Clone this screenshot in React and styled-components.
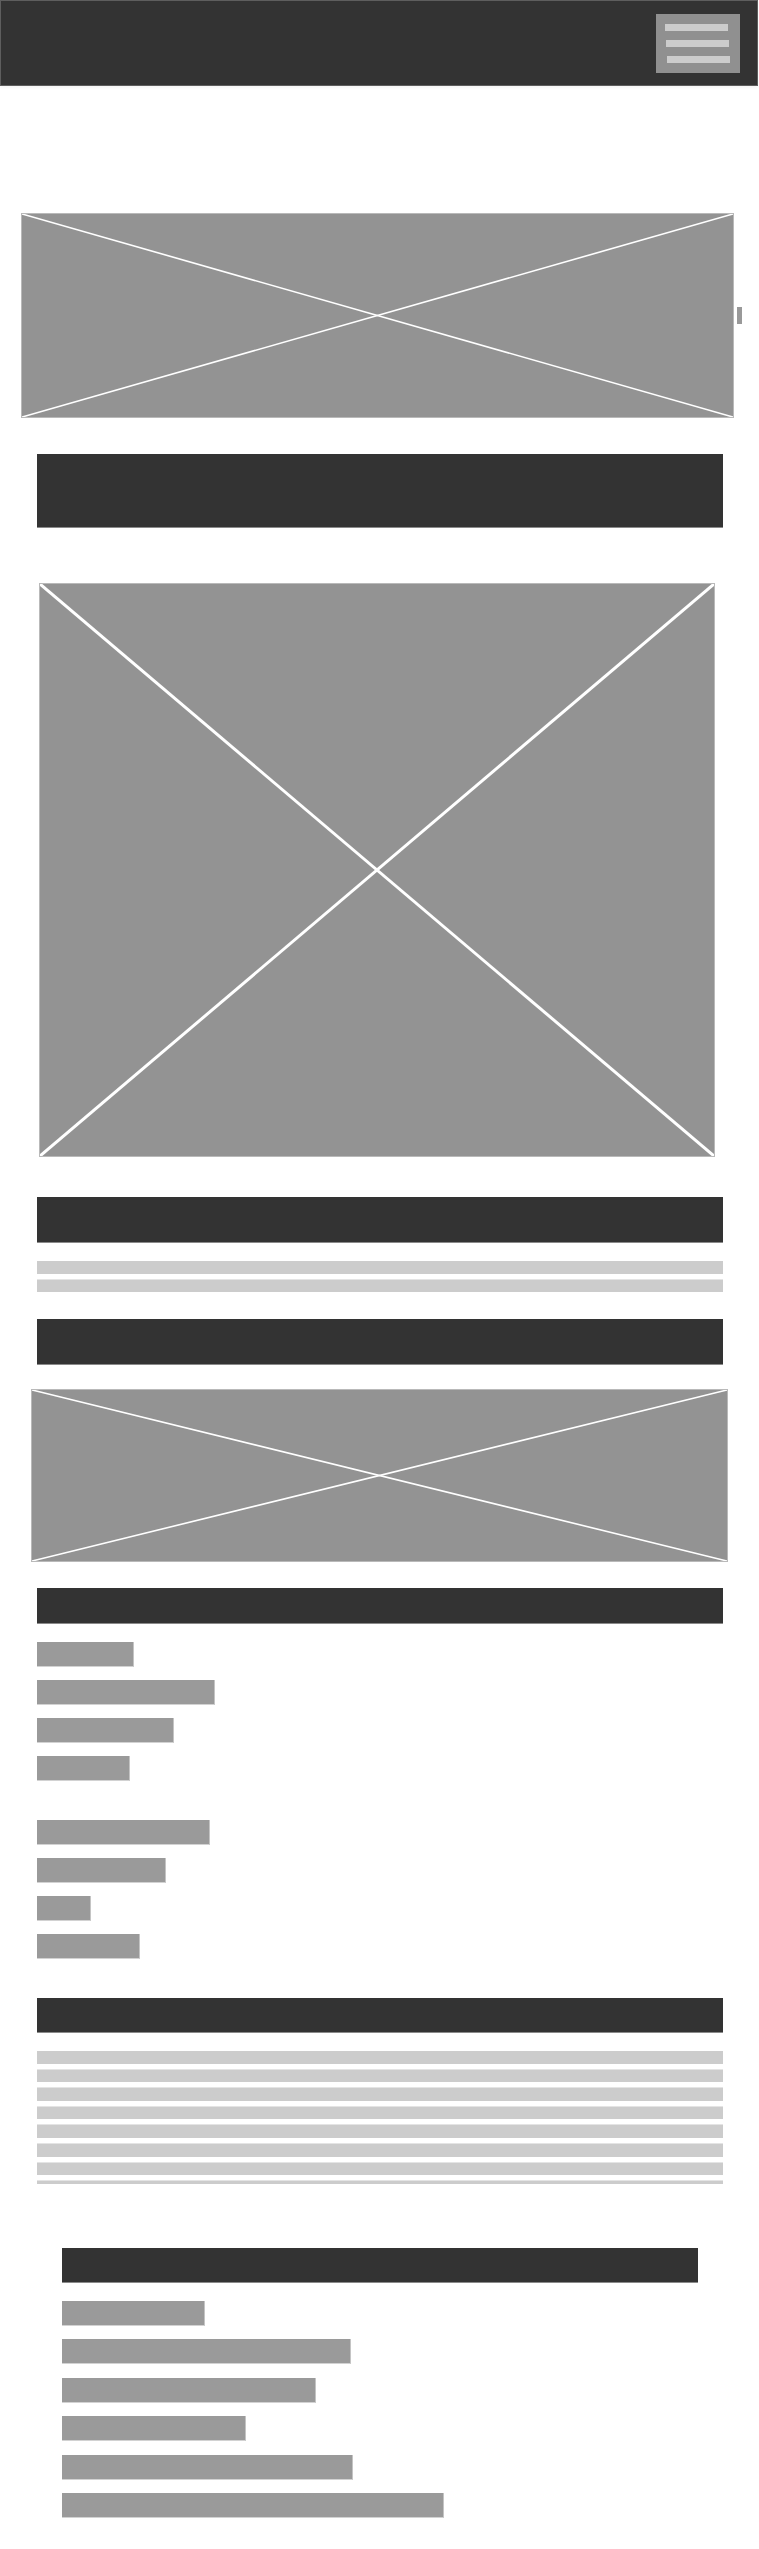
import React from 'react';
import styled, { createGlobalStyle } from 'styled-components';

const GlobalStyle = createGlobalStyle`
  html, body {
    margin: 0;
    padding: 0;
    background: #ffffff;
    font-family: "Liberation Sans", Arial, sans-serif;
  }
`;

// STYLES
const Header = styled.header`
  box-sizing: border-box;
  width: 758px;
  height: 86px;
  background: #333333;
  border: 1px solid #5e5e5e;
  display: flex;
  align-items: center;
  justify-content: flex-end;
  padding-right: 17px;
  box-shadow: 0 2px 3px rgba(0, 0, 0, 0.04);
`;

const MenuButton = styled.button`
  box-sizing: border-box;
  width: 84px;
  height: 59px;
  background: #909090;
  border: none;
  padding: 10px 0 10px 9px;
  display: flex;
  flex-direction: column;
  justify-content: space-between;
  align-items: flex-start;
  cursor: pointer;
`;

const MenuLine = styled.span`
  display: block;
  width: 63px;
  height: 7px;
  background: #cccccc;
  margin-left: ${(p) => p.$shift || 0}px;
`;

const Main = styled.main`
  display: flex;
  flex-direction: column;
  padding-left: 37px;
  width: 686px;
`;

const HeroRow = styled.div`
  display: flex;
  align-items: center;
  gap: 3px;
  width: 721px;
  margin-top: 127px;
  margin-left: -16px;
`;

const ScrollTick = styled.span`
  display: block;
  flex-shrink: 0;
  width: 5px;
  height: 17px;
  background: #999999;
`;

const Frame = styled.div`
  box-sizing: border-box;
  width: ${(p) => p.$w}px;
  height: ${(p) => p.$h}px;
  margin-top: ${(p) => p.$mt || 0}px;
  margin-left: ${(p) => p.$ml || 0}px;
  background: #939393;
  border: 1px solid #b9b9b9;
  flex-shrink: 0;

  svg {
    display: block;
    width: 100%;
    height: 100%;
  }
`;

const Block = styled.div`
  box-sizing: border-box;
  width: ${(p) => p.$w || 686}px;
  height: ${(p) => p.$h}px;
  margin-top: ${(p) => p.$mt}px;
  margin-left: ${(p) => p.$ml || 0}px;
  background: #333333;
  border-bottom: 1px solid #8a8a8a;
`;

const Stripes = styled.div`
  display: flex;
  flex-direction: column;
  gap: 6px;
  margin-top: ${(p) => p.$mt}px;
  height: ${(p) => p.$h}px;
  overflow: hidden;
`;

const Stripe = styled.div`
  flex-shrink: 0;
  height: 12.6px;
  width: 686px;
  background: #cccccc;
  box-shadow: 0 -1px 0 #e4e4e4;
`;

const List = styled.ul`
  list-style: none;
  margin: ${(p) => p.$mt}px 0 0 ${(p) => p.$ml || 0}px;
  padding: 0;
  display: flex;
  flex-direction: column;
  gap: ${(p) => p.$gap || 13}px;
`;

const ListBar = styled.li`
  box-sizing: border-box;
  width: ${(p) => p.$w}px;
  height: 25px;
  background: #9a9a9a;
  border-right: 1px solid #c4c4c4;
  border-bottom: 1px solid #d2d2d2;
`;

const Placeholder = ({ w, h, mt, ml, stroke = 2 }) => (
  <Frame $w={w} $h={h} $mt={mt} $ml={ml}>
    <svg viewBox="0 0 100 100" preserveAspectRatio="none">
      <line x1="0" y1="0" x2="100" y2="100" stroke="#ffffff" strokeWidth={stroke} vectorEffect="non-scaling-stroke" />
      <line x1="100" y1="0" x2="0" y2="100" stroke="#ffffff" strokeWidth={stroke} vectorEffect="non-scaling-stroke" />
    </svg>
  </Frame>
);

const listOne = [97, 178, 137, 93];
const listTwo = [173, 129, 54, 103];
const listThree = [143, 289, 254, 184, 291, 382];

const App = () => {
  return (
    <>
      <GlobalStyle />
      <Header>
        <MenuButton aria-label="menu">
          <MenuLine />
          <MenuLine $shift={1} />
          <MenuLine $shift={2} />
        </MenuButton>
      </Header>

      <Main>
        <HeroRow>
          <Placeholder w={713} h={205} stroke={1.6} />
          <ScrollTick />
        </HeroRow>

        <Block $h={74} $mt={36} />

        <Placeholder w={676} h={574} mt={55} ml={2} stroke={3} />

        <Block $h={46} $mt={40} />
        <Stripes $mt={18} $h={31}>
          <Stripe />
          <Stripe />
        </Stripes>

        <Block $h={46} $mt={27} />
        <Placeholder w={697} h={173} mt={24} ml={-6} stroke={1.6} />

        <Block $h={36} $mt={26} />
        <List $mt={18}>
          {listOne.map((w, i) => <ListBar key={i} $w={w} />)}
        </List>
        <List $mt={39}>
          {listTwo.map((w, i) => <ListBar key={i} $w={w} />)}
        </List>

        <Block $h={35} $mt={39} />
        <Stripes $mt={18} $h={133}>
          {Array.from({ length: 8 }).map((_, i) => <Stripe key={i} />)}
        </Stripes>

        <Block $w={636} $h={35} $mt={64} $ml={25} />
        <List $mt={18} $ml={25} $gap={13.4}>
          {listThree.map((w, i) => <ListBar key={i} $w={w} />)}
        </List>
      </Main>
    </>
  );
};

export default App;
